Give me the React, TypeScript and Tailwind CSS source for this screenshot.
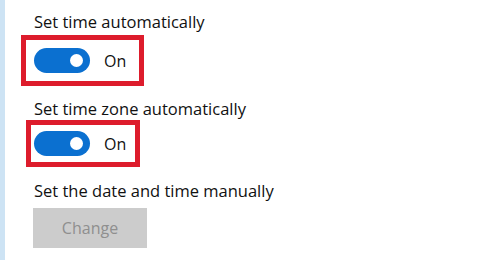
export default function App() {
  return (
    <div className="flex w-[502px] h-[260px] overflow-hidden bg-white text-[#111] font-['Open_Sans',sans-serif]">
      {/* left edge of the nav pane */}
      <div className="w-[5px] shrink-0 bg-[#cde3f4]" />

      <div className="flex flex-col pl-[29px] pt-[11px]">
        <p className="text-[16.5px] leading-[22px]">Set time automatically</p>

        <div className="ml-[-13px] mt-[2px] flex h-[51px] w-[123px] items-center border-[5px] border-[#dd1c2c] pl-[8px]">
          <Toggle />
        </div>

        <p className="mt-[12px] text-[16.5px] leading-[22px]">Set time zone automatically</p>

        <div className="ml-[-8px] mt-0 flex h-[47px] w-[114px] items-center border-[5px] border-[#dd1c2c] pl-[3px]">
          <Toggle />
        </div>

        <p className="mt-[13px] text-[16.5px] leading-[22px]">Set the date and time manually</p>

        <button className="ml-[-1px] mt-[6px] h-[40px] w-[114px] bg-[#cccccc] text-[16px] text-[#8f8f8f]">
          Change
        </button>
      </div>
    </div>
  );
}

function Toggle() {
  return (
    <div className="flex items-center">
      <div className="flex h-[25px] w-[56px] items-center justify-end rounded-full bg-[#0b70d0] pr-[7px]">
        <div className="h-[13px] w-[13px] rounded-full bg-white" />
      </div>
      <span className="ml-[14px] text-[16px] leading-[22px]">On</span>
    </div>
  );
}
